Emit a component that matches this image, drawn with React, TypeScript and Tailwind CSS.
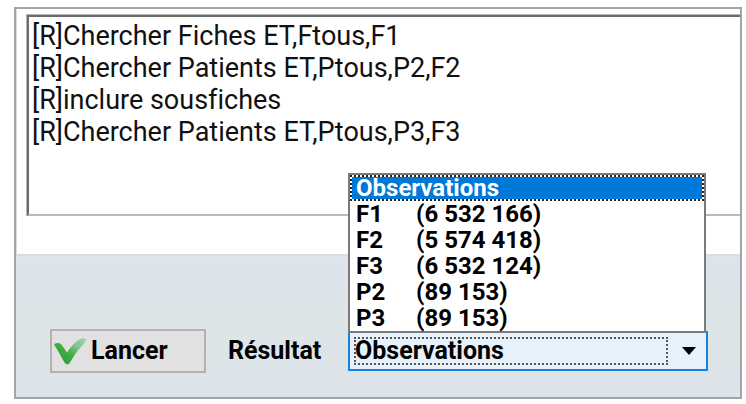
import { useState } from 'react';

const commands = [
  '[R]Chercher Fiches ET,Ftous,F1',
  '[R]Chercher Patients ET,Ptous,P2,F2',
  '[R]inclure sousfiches',
  '[R]Chercher Patients ET,Ptous,P3,F3',
];

const results = [
  { name: 'Observations', count: '' },
  { name: 'F1', count: '(6 532 166)' },
  { name: 'F2', count: '(5 574 418)' },
  { name: 'F3', count: '(6 532 124)' },
  { name: 'P2', count: '(89 153)' },
  { name: 'P3', count: '(89 153)' },
];

function CheckIcon() {
  return (
    <svg viewBox="0 0 34 28" className="h-7 w-[34px] shrink-0" aria-hidden="true">
      <defs>
        <linearGradient id="check" x1="0" y1="1" x2="1" y2="0">
          <stop offset="0" stopColor="#1f9a4a" />
          <stop offset="0.45" stopColor="#3fae3c" />
          <stop offset="0.7" stopColor="#7cc48c" />
          <stop offset="1" stopColor="#a0d6aa" />
        </linearGradient>
      </defs>
      <path
        d="M1 7.500 Q4 5 8 7 Q11 11 14 15.500 Q20 6 27 2 Q30.500 0.500 32.500 2 Q33.500 4 31 6.500 Q23 15 18.500 23 Q16 27.500 14 27.500 Q12 27 10 23 Q6 15 1 7.500 Z"
        fill="url(#check)"
      />
    </svg>
  );
}

export default function App() {
  const [script, setScript] = useState(commands.join('\n'));
  const [selected, setSelected] = useState('Observations');

  return (
    <div className="min-h-screen bg-white pt-[7px] pr-1 pl-3.5 font-['Roboto','Liberation_Sans',sans-serif] text-black">
      <main className="border-2 border-[#a5a5a5] bg-[#dde4eb]">
        {/* Script editor */}
        <section className="border-b-2 border-l border-[#dcdcdc] bg-white pt-[5px] pb-[38px] pl-[9px]">
          <div className="border-t border-l border-[#b5b5b5]">
            <textarea
              aria-label="Script"
              rows={6}
              spellCheck={false}
              value={script}
              onChange={(e) => setScript(e.target.value)}
              className="block w-full resize-none overflow-hidden border-t-2 border-b-2 border-l-2 border-t-[#6b6b6b] border-b-[#b8bbbe] border-l-[#6b6b6b] bg-white px-[3px] pt-[3px] pb-0.5 text-[27px] leading-8 text-[#111] outline-none [font-variant-ligatures:none]"
            />
          </div>
        </section>

        {/* Action bar */}
        <form
          onSubmit={(e) => e.preventDefault()}
          className="flex items-center bg-linear-to-b from-[#dde4ed] via-[#dde5e6] to-[#dde4eb] pt-[73px] pr-8 pb-6 pl-[34px] text-[25px] font-bold"
        >
          <button
            type="submit"
            className="flex h-11 w-[156px] items-center gap-1 border-2 border-[#b2b2b2] bg-[#e1e1e1] pl-px"
          >
            <CheckIcon />
            <span className="leading-7">Lancer</span>
          </button>
          <label htmlFor="resultat" className="ml-[22px] w-[120px] leading-7">
            Résultat
          </label>

          <div className="relative min-w-0 flex-1">
            <select
              id="resultat"
              value={selected}
              onChange={(e) => setSelected(e.target.value)}
              className="block h-10 w-full appearance-none border-2 border-[#1683e0] bg-[#e5f1fb] pl-[5px] leading-7 outline-none"
            >
              {results.map((r) => (
                <option key={r.name}>{r.name}</option>
              ))}
            </select>
            {/* focus rectangle and arrow of the closed box */}
            <span className="pointer-events-none absolute top-1.5 right-10 bottom-1.5 left-1.5 border-2 border-dotted border-[#555]" />
            <svg viewBox="0 0 14 8" className="pointer-events-none absolute top-4 right-3 h-2 w-3.5" aria-hidden="true">
              <path d="M0 0H14L7 8Z" fill="#000" />
            </svg>

            <ul
              role="listbox"
              aria-label="Résultat"
              className="absolute right-0.5 bottom-[38px] left-0 border-2 border-[#7a7a7a] bg-white text-2xl"
            >
              {results.map((r) => (
                <li
                  key={r.name}
                  role="option"
                  aria-selected={r.name === selected}
                  onClick={() => setSelected(r.name)}
                  className="flex h-[26px] items-center border-2 border-transparent pl-1 leading-6 aria-selected:border-dotted aria-selected:border-[#222] aria-selected:bg-[#0078d7] aria-selected:bg-clip-padding aria-selected:text-white"
                >
                  <span className={r.count ? 'w-[60px]' : ''}>{r.name}</span>
                  <span>{r.count}</span>
                </li>
              ))}
            </ul>
          </div>
        </form>
      </main>
    </div>
  );
}
